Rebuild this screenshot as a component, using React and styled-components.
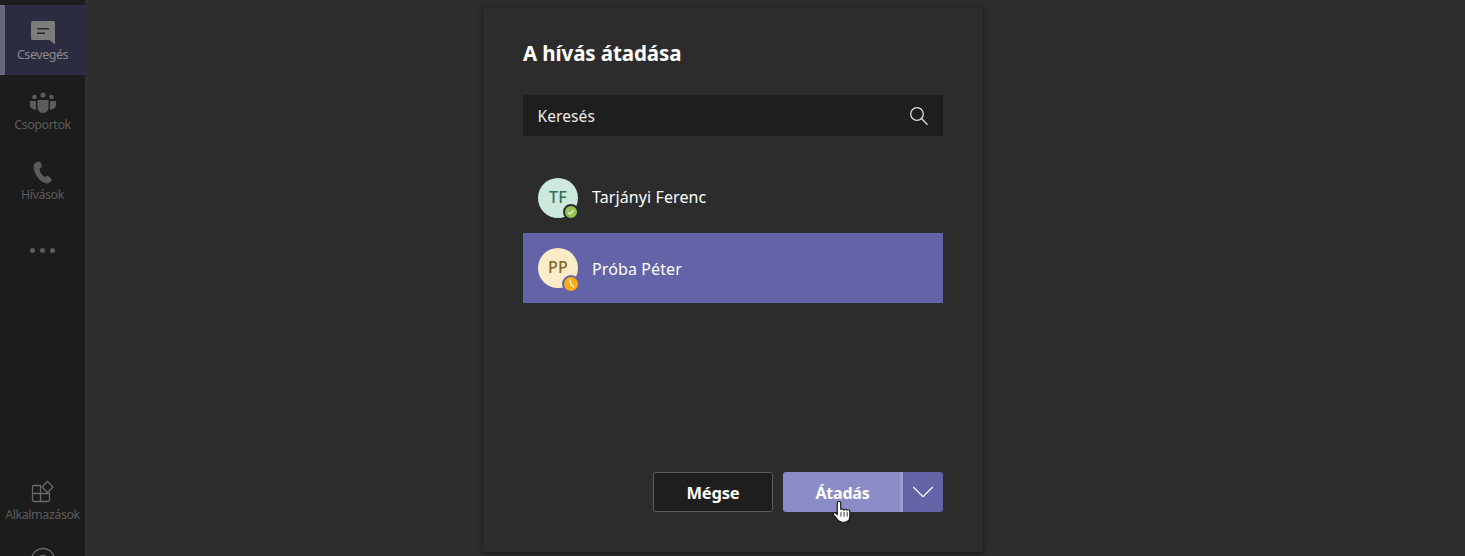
import styled, { createGlobalStyle } from 'styled-components'
import { ChevronDown } from 'lucide-react'

const GlobalStyle = createGlobalStyle`
  html, body {
    margin: 0;
    padding: 0;
    height: 100%;
    background: #2e2e2e;
    font-family: "Noto Sans", "Open Sans", sans-serif;
    overflow: hidden;
  }
`

const ChatIcon = () => (
  <svg width="26" height="26" viewBox="0 0 26 26">
    <path d="M1 2.500A1.500 1.500 0 0 1 2.500 1h21A1.500 1.500 0 0 1 25 2.500v22l-5.500-4.500h-17A1.500 1.500 0 0 1 1 18.500z" fill="#7b7b7b" />
    <path d="M7 8h12v1.500H7zM7 12.500h8V14H7z" fill="#2a2a38" />
  </svg>
)

const TeamsIcon = () => (
  <svg width="26" height="22" viewBox="0 0 26 22">
    <g fill="#5c5c5c">
      <circle cx="13" cy="3" r="2.600" />
      <circle cx="4.500" cy="5" r="2.300" />
      <circle cx="21.500" cy="5" r="2.300" />
      <path d="M7.500 8h11v7.500a5.500 5.500 0 0 1-11 0z" />
      <path d="M0 9h6v6.500c0 .8.100 1.600.300 2.300C3 17.800 0 16 0 13z" />
      <path d="M26 9h-6v6.500c0 .8-.100 1.600-.300 2.300 3.300 0 6.300-1.800 6.300-4.800z" />
    </g>
  </svg>
)

const PhoneIcon = () => (
  <svg width="20" height="24" viewBox="0 0 20 24">
    <path d="M3 1.500 5.800.500c.8-.2 1.400.1 1.700.8l1.300 3.500c.2.700 0 1.200-.5 1.600L6.500 7.800c.3 3.300 2.300 6.600 5.400 8.200l1.900-1c.6-.3 1.200-.2 1.700.3l2.800 2.600c.5.500.6 1.200.1 1.800-1.300 1.700-3.100 3-5 2.700C6.500 21.300.5 12.500.6 5.300.7 3.500 1.600 2.200 3 1.500z" fill="#5c5c5c" />
  </svg>
)

const AppsIcon = () => (
  <svg width="26" height="26" viewBox="0 0 26 26" fill="none" stroke="#6a6a6a" strokeWidth="1.300">
    <path d="M2.500 13.500V7A1.500 1.500 0 0 1 4 5.500h6.500v16H4A1.500 1.500 0 0 1 2.500 20z" />
    <path d="M2.500 13.500h17v6.500a1.500 1.500 0 0 1-1.500 1.500h-7.500" />
    <path d="m17.500 1.500 5.500 5.500-5.500 5.500-5.500-5.500z" />
  </svg>
)

const HelpIcon = () => (
  <svg width="26" height="26" viewBox="0 0 26 26" fill="none" stroke="#6a6a6a" strokeWidth="1.300">
    <circle cx="13" cy="13" r="11.500" />
    <circle cx="13" cy="13" r="4.500" />
  </svg>
)

const SearchIcon = () => (
  <svg width="20" height="20" viewBox="0 0 20 20" fill="none" stroke="#dedede" strokeWidth="1.300">
    <circle cx="8" cy="8" r="6.300" />
    <path d="m12.500 12.500 6 6.300" />
  </svg>
)

const CheckMark = () => (
  <svg width="8" height="8" viewBox="0 0 9 9" fill="none" stroke="#e6f2d5" strokeWidth="1.500">
    <path d="M1.500 4.800 3.500 6.800 7.500 2.500" />
  </svg>
)

const ClockMark = () => (
  <svg width="10" height="10" viewBox="0 0 9 9" fill="none" stroke="#fff5d8" strokeWidth="1.200">
    <path d="M3.500.500 4.500 5l3 2.500" />
  </svg>
)

const HandCursor = () => (
  <svg width="21" height="23" viewBox="0 0 18 25" preserveAspectRatio="none">
    <path
      d="M4.500 2a1.500 1.500 0 0 1 3 0v7.500c.3-1.200 2.600-1.200 2.800.2.400-1 2.400-1 2.600.4.500-.8 2.300-.6 2.400.8v5.800c0 3.500-1.700 6.300-5 6.300H9c-2.200 0-3.300-1-4.200-2.600L1.200 14.800c-.8-1.300.8-2.500 1.900-1.500l1.400 1.500z"
      fill="#fff"
      stroke="#111"
      strokeWidth="1"
    />
    <path d="M7.700 12v5M10.400 12v5M13 12v5" stroke="#111" strokeWidth=".8" />
  </svg>
)

const Page = styled.div`
  position: relative;
  display: flex;
  width: 1465px;
  height: 556px;
  overflow: hidden;
  background: #2e2e2e;
`

const Rail = styled.nav`
  flex: none;
  width: 85px;
  height: 556px;
  padding-top: 5px;
  box-sizing: border-box;
  display: flex;
  flex-direction: column;
  overflow: hidden;
  background: #1c1c1c;
`

const RailGroup = styled.div`
  display: flex;
  flex-direction: column;
`

const RailBottom = styled(RailGroup)`
  margin-top: auto;
  margin-bottom: -24px;
`

const RailItem = styled.div`
  position: relative;
  height: ${p => p.$height || 70}px;
  box-sizing: border-box;
  display: flex;
  flex-direction: column;
  align-items: center;
  padding-top: ${p => p.$pad || 15}px;
  font-size: 12.500px;
  letter-spacing: -0.450px;
  line-height: 16px;
  color: ${p => (p.$active ? '#8a8a8a' : '#5a5a5a')};
  background: ${p => (p.$active ? '#2c2c40' : 'transparent')};

  ${p => p.$active && `
    &::before {
      content: '';
      position: absolute;
      left: 0;
      top: 0;
      bottom: 0;
      width: 5px;
      background: #67667c;
    }
  `}
`

const IconSlot = styled.div`
  height: 26px;
  display: flex;
  align-items: center;
  justify-content: center;
  margin-bottom: 1px;
`

const Dots = styled.div`
  display: flex;
  gap: 5px;
  margin-top: 18px;

  span {
    width: 5px;
    height: 5px;
    border-radius: 50%;
    background: #5c5c5c;
  }
`

const Main = styled.main`
  flex: 1;
  display: flex;
  padding-left: 398px;
`

const Dialog = styled.section`
  width: 500px;
  height: 545px;
  margin-top: 7px;
  padding: 30px 40px 40px;
  box-sizing: border-box;
  display: flex;
  flex-direction: column;
  background: #2d2c2c;
  box-shadow: 0 0 8px rgba(0, 0, 0, 0.25), 0 2px 4px rgba(0, 0, 0, 0.3);
`

const Title = styled.h1`
  margin: 0;
  height: 32px;
  font-size: 20.500px;
  font-weight: 700;
  line-height: 32px;
  letter-spacing: -0.100px;
  color: #fff;
`

const SearchBox = styled.div`
  margin-top: 26px;
  height: 41px;
  padding: 0 14px 0 14.500px;
  display: flex;
  align-items: center;
  justify-content: space-between;
  background: #1e1e1e;
  font-size: 15.500px;
  letter-spacing: 0.100px;
  color: #ececec;
`

const People = styled.div`
  margin-top: 27px;
  display: flex;
  flex-direction: column;
`

const Person = styled.div`
  height: 70px;
  padding-left: 15px;
  display: flex;
  align-items: center;
  gap: 14px;
  font-size: 16px;
  letter-spacing: 0.100px;
  color: #fff;
  background: ${p => (p.$selected ? '#6264a7' : 'transparent')};
`

const Name = styled.span`
  padding-bottom: ${p => (p.$selected ? 0 : 2)}px;
  padding-top: ${p => (p.$selected ? 2 : 0)}px;
`

const Avatar = styled.div`
  position: relative;
  width: 40px;
  height: 40px;
  border-radius: 50%;
  display: flex;
  align-items: center;
  justify-content: center;
  font-size: 16px;
  font-weight: 500;
  letter-spacing: 0.300px;
  padding-bottom: 2px;
  box-sizing: border-box;
  background: ${p => p.$bg};
  color: ${p => p.$fg};
`

const Status = styled.span`
  position: absolute;
  right: ${p => p.$right}px;
  bottom: ${p => p.$bottom}px;
  width: ${p => p.$size}px;
  height: ${p => p.$size}px;
  display: flex;
  align-items: center;
  justify-content: center;
  border-radius: 50%;
  background: ${p => p.$color};
  border: 2px solid ${p => p.$ring};
`

const Actions = styled.div`
  margin-top: auto;
  display: flex;
  justify-content: flex-end;
  gap: 10px;
`

const CancelButton = styled.button`
  width: 120px;
  height: 40px;
  padding: 0;
  border: 1px solid #5e5e5e;
  border-radius: 3px;
  background: #1e1e1e;
  color: #fff;
  font: 700 16.500px "Noto Sans", sans-serif;
  letter-spacing: -0.200px;
`

const SplitButton = styled.div`
  display: flex;
  width: 160px;
  height: 40px;
  border-radius: 3px;
  overflow: hidden;
`

const PrimaryButton = styled.button`
  flex: none;
  width: 117px;
  padding: 2px 0 0 2px;
  border: none;
  background: #8b8cc7;
  color: #fff;
  font: 700 16px "Noto Sans", sans-serif;
  letter-spacing: -0.200px;
`

const Divider = styled.span`
  flex: none;
  width: 3px;
  background: #9b9bcc;
`

const ArrowButton = styled.button`
  flex: 1;
  padding: 0;
  border: none;
  display: flex;
  align-items: center;
  justify-content: center;
  background: #6264a7;
  color: #fff;
`

const CursorSpot = styled.div`
  position: absolute;
  left: 832px;
  top: 501px;
  line-height: 0;
  z-index: 5;
`

const App = () => {
  return (
    <>
      <GlobalStyle />
      <Page>
        <Rail>
          <RailGroup>
            <RailItem $active>
              <IconSlot><ChatIcon /></IconSlot>
              Csevegés
            </RailItem>
            <RailItem>
              <IconSlot><TeamsIcon /></IconSlot>
              Csoportok
            </RailItem>
            <RailItem>
              <IconSlot><PhoneIcon /></IconSlot>
              Hívások
            </RailItem>
            <RailItem>
              <Dots><span /><span /><span /></Dots>
            </RailItem>
          </RailGroup>
          <RailBottom>
            <RailItem>
              <IconSlot><AppsIcon /></IconSlot>
              Alkalmazások
            </RailItem>
            <RailItem $height={45} $pad={12}>
              <IconSlot><HelpIcon /></IconSlot>
            </RailItem>
          </RailBottom>
        </Rail>
        <Main>
          <Dialog>
            <Title>A hívás átadása</Title>
            <SearchBox>
              Keresés
              <SearchIcon />
            </SearchBox>
            <People>
              <Person>
                <Avatar $bg="#cde8dc" $fg="#2f6f55">
                  TF
                  <Status $size={12} $right={-1} $bottom={-2} $color="#92c353" $ring="#2d2c2c"><CheckMark /></Status>
                </Avatar>
                <Name>Tarjányi Ferenc</Name>
              </Person>
              <Person $selected>
                <Avatar $bg="#fdecc8" $fg="#85651f">
                  PP
                  <Status $size={14} $right={-2} $bottom={-5} $color="#fcac12" $ring="#6264a7"><ClockMark /></Status>
                </Avatar>
                <Name $selected>Próba Péter</Name>
              </Person>
            </People>
            <Actions>
              <CancelButton>Mégse</CancelButton>
              <SplitButton>
                <PrimaryButton>Átadás</PrimaryButton>
                <Divider />
                <ArrowButton><ChevronDown size={38} strokeWidth={0.7} /></ArrowButton>
              </SplitButton>
            </Actions>
          </Dialog>
        </Main>
        <CursorSpot><HandCursor /></CursorSpot>
      </Page>
    </>
  )
}

export default App
